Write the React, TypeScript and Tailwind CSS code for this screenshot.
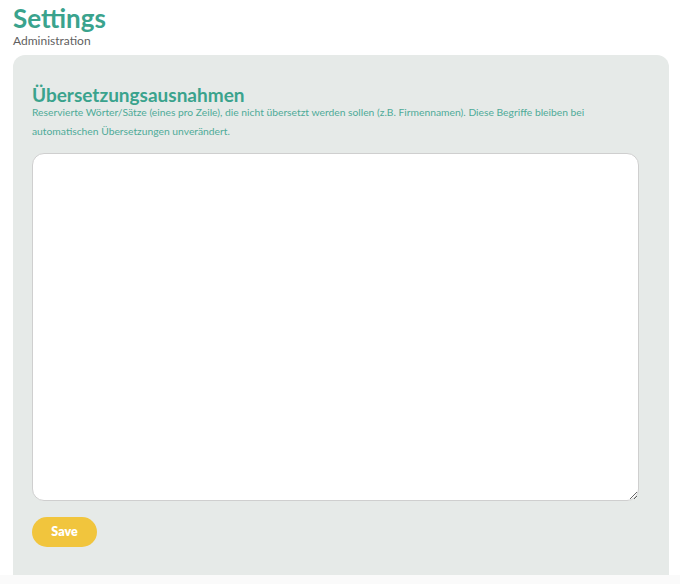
import React, { useState } from 'react';

const App = () => {
	const [value, setValue] = useState('');

	return (
		<div className="flex min-h-screen flex-col bg-white font-['Lato',sans-serif]">
			<div className="px-[13px] pt-[3px]">
				<h1 className="text-[26px] leading-[30px] font-bold text-[#3aa38d]">Settings</h1>
				<p className="text-[12px] leading-[16px] text-[#5f5f5f] mb-[6px]">Administration</p>
			</div>
			<div className="ml-[13px] mr-[11px] h-[520px] rounded-t-[12px] bg-[#e6eae8] pl-[19px] pr-[30px] pt-[29px]">
				<h2 className="text-[19px] leading-[22px] font-bold text-[#3aa38d]">Übersetzungsausnahmen</h2>
				<p className="-mt-[3px] max-w-[590px] text-[10.3px] leading-[19px] text-[#4fab98]">
					Reservierte Wörter/Sätze (eines pro Zeile), die nicht übersetzt werden sollen (z.B. Firmennamen). Diese
					Begriffe bleiben bei
					<br />
					automatischen Übersetzungen unverändert.
				</p>
				<textarea
					value={value}
					onChange={(e) => setValue(e.target.value)}
					className="mt-[12px] block h-[348px] w-full rounded-[12px] border border-[#cfcfcf] bg-white p-3 text-sm outline-none"
				/>
				<button className="mt-[16px] h-[30px] w-[65px] rounded-full bg-[#f1c53d] text-[12.5px] font-extrabold text-white">
					Save
				</button>
			</div>
			<div className="flex-1 bg-[#fafafa]" />
		</div>
	);
};

export default App;
